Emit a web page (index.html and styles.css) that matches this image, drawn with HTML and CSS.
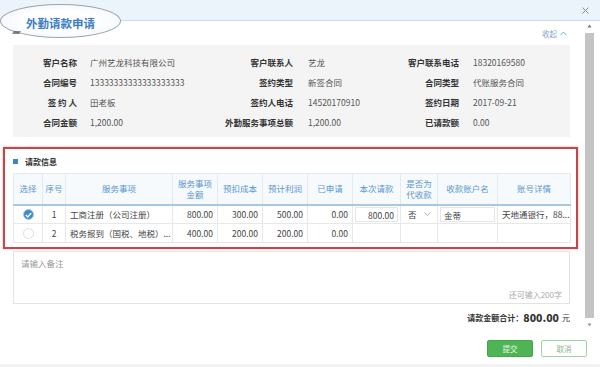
FILE: index.html
```html
<!DOCTYPE html>
<html>
<head>
  <meta charset="utf-8">
  <title>外勤请款申请</title>
  <link rel="stylesheet" href="styles.css">
</head>
<body>
  <div class="dialog">
    <div class="dlg-head">
      <svg class="close" width="7" height="7" viewBox="0 0 7 7"><path d="M0.5 0.5L6.5 6.5M6.5 0.5L0.5 6.5" stroke="#8c8c8c" stroke-width="1"/></svg>
    </div>

    <!-- 标注圈 -->
    <div class="title-oval"><span>外勤请款申请</span></div>
    <div class="oval-mark"></div>

    <div class="dlg-body">
      <div class="content">
        <div class="collapse">
          <span>收起</span>
          <svg width="7" height="5" viewBox="0 0 7 5"><path d="M0.5 4.2L3.5 1L6.5 4.2" fill="none" stroke="#7fa6cf" stroke-width="1"/></svg>
        </div>

        <div class="info-panel">
          <span class="lbl">客户名称</span><span class="val v1">广州艺龙科技有限公司</span>
          <span class="lbl">客户联系人</span><span class="val v2">艺龙</span>
          <span class="lbl">客户联系电话</span><span class="val v3">18320169580</span>

          <span class="lbl">合同编号</span><span class="val v1">13333333333333333333</span>
          <span class="lbl">签约类型</span><span class="val v2">新签合同</span>
          <span class="lbl">合同类型</span><span class="val v3">代账服务合同</span>

          <span class="lbl">签 约 人</span><span class="val v1">田老板</span>
          <span class="lbl">签约人电话</span><span class="val v2">14520170910</span>
          <span class="lbl">签约日期</span><span class="val v3">2017-09-21</span>

          <span class="lbl">合同金额</span><span class="val v1">1,200.00</span>
          <span class="lbl">外勤服务事项总额</span><span class="val v2">1,200.00</span>
          <span class="lbl">已请款额</span><span class="val v3">0.00</span>
        </div>

        <div class="section">
          <div class="section-title"><i class="sq"></i>请款信息</div>
          <table class="grid">
            <colgroup>
              <col style="width:29px"><col style="width:23px"><col style="width:107px">
              <col style="width:45px"><col style="width:45px"><col style="width:45px">
              <col style="width:45px"><col style="width:48px"><col style="width:37px">
              <col style="width:60px"><col style="width:73px">
            </colgroup>
            <thead>
              <tr>
                <th>选择</th><th>序号</th><th>服务事项</th><th>服务事项<br>金额</th>
                <th>预扣成本</th><th>预计利润</th><th>已申请</th><th>本次请款</th>
                <th>是否为<br>代收款</th><th>收款账户名</th><th>账号详情</th>
              </tr>
            </thead>
            <tbody>
              <tr>
                <td class="c"><span class="radio on"><svg width="7" height="6" viewBox="0 0 7 6"><path d="M0.8 3L2.8 5L6.2 1" fill="none" stroke="#fff" stroke-width="1.3"/></svg></span></td>
                <td class="c">1</td>
                <td>工商注册（公司注册）</td>
                <td class="r">800.00</td><td class="r">300.00</td><td class="r">500.00</td><td class="r">0.00</td>
                <td class="in"><span class="box r">800.00</span></td>
                <td class="in"><span class="sel">否<svg width="7" height="4" viewBox="0 0 7 4"><path d="M0.5 0.5L3.5 3.5L6.5 0.5" fill="none" stroke="#999" stroke-width="0.8"/></svg></span></td>
                <td class="in"><span class="box">金蒂</span></td>
                <td>天地通银行，88...</td>
              </tr>
              <tr>
                <td class="c"><span class="radio"></span></td>
                <td class="c">2</td>
                <td>税务报到（国税、地税）...</td>
                <td class="r">400.00</td><td class="r">200.00</td><td class="r">200.00</td><td class="r">0.00</td>
                <td></td><td></td><td></td><td></td>
              </tr>
            </tbody>
          </table>
        </div>

        <div class="remark">
          <span class="ph">请输入备注</span>
          <span class="count">还可输入200字</span>
        </div>

        <div class="total">请款金额合计：<b>800.00</b><span class="unit">元</span></div>
      </div>

      <div class="scrollbar">
        <svg width="9" height="10" viewBox="0 0 9 10"><path d="M2.5 6.5L4.5 3.5L6.5 6.5Z" fill="#777"/></svg>
        <div class="thumb"></div>
        <svg width="9" height="10" viewBox="0 0 9 10"><path d="M2.5 3.5L4.5 6.5L6.5 3.5Z" fill="#999"/></svg>
      </div>
    </div>

    <div class="dlg-foot">
      <button class="btn ok">提交</button>
      <button class="btn cancel">取消</button>
    </div>
  </div>
</body>
</html>
```

FILE: styles.css
```css
* {
  box-sizing: border-box;
}
body {
  margin: 0;
  background: #fff;
  font-family: "Noto Sans CJK SC", "Noto Sans", sans-serif;
  font-size: 8.5px;
  color: #555;
}
.dialog {
  position: relative;
  width: 600px;
  height: 367px;
  overflow: hidden;
}
.dlg-head {
  height: 21px;
  background: #ebf3fb;
  border-bottom: 1px solid #c9dbec;
  display: flex;
  justify-content: flex-end;
  align-items: center;
  padding-right: 11px;
}
.title-oval {
  position: absolute;
  left: 0;
  top: 4px;
  width: 121px;
  height: 34px;
  border-radius: 50%;
  border: 1px solid #9ea4aa;
  background: radial-gradient(ellipse at center, #ffffff 40%, #eef4fa 100%);
  display: flex;
  justify-content: center;
  align-items: center;
  padding-top: 5px;
}
.title-oval span {
  color: #3b7cc6;
  font-weight: bold;
  font-size: 11.5px;
  line-height: 1;
}
.oval-mark {
  position: absolute;
  left: 13px;
  top: 31px;
  width: 7px;
  height: 3px;
  background: #555;
  transform: skewX(-30deg);
  opacity: 0.7;
}
.dlg-body {
  display: flex;
  height: 309px;
}
.content {
  width: 575px;
  margin-left: 3px;
}
.collapse {
  height: 24px;
  display: flex;
  justify-content: flex-end;
  align-items: center;
  gap: 3px;
  padding-right: 11px;
  color: #7fa6cf;
  font-size: 7.5px;
}
.info-panel {
  margin: 0 8px 0 10px;
  background: #f4f4f4;
  padding: 7px 0 5px;
  display: grid;
  grid-template-columns: 64px 143px 73px 102px 64px 111px;
  grid-auto-rows: 20px;
  align-items: center;
  line-height: 1;
}
.lbl {
  text-align: right;
  font-weight: bold;
  color: #333;
  white-space: pre;
}
.val {
  color: #555;
  white-space: nowrap;
}
.v1 { padding-left: 13px; }
.v2 { padding-left: 15px; }
.v3 { padding-left: 14px; }
.section {
  margin-top: 10px;
  border: 2px solid #c4474c;
  box-shadow: 0 0 2px rgba(200, 80, 80, 0.5);
  padding: 0 6px 4px 8px;
}
.section-title {
  height: 24px;
  display: flex;
  align-items: center;
  gap: 7px;
  font-weight: bold;
  font-size: 8px;
  color: #333;
}
.sq {
  width: 5px;
  height: 5px;
  background: #3a85c6;
}
.grid {
  width: 100%;
  border-collapse: collapse;
  table-layout: fixed;
  font-size: 8.5px;
  line-height: 1.2;
}
.grid th {
  height: 31px;
  font-weight: normal;
  color: #5b97cf;
  background: #f7fafd;
  border: 1px solid #e4eaf0;
  border-bottom: 2px solid #a9c8e4;
  padding: 0;
  line-height: 11px;
}
.grid td {
  height: 19px;
  border: 1px solid #e8e8e8;
  padding: 0 4px;
  color: #444;
  white-space: nowrap;
  overflow: hidden;
}
.grid td.c { text-align: center; padding: 0; }
.grid td.r { text-align: right; }
.grid td.in { padding: 1px 2px; }
.radio {
  display: inline-flex;
  justify-content: center;
  align-items: center;
  width: 11px;
  height: 11px;
  border-radius: 50%;
  border: 1px solid #dedede;
  vertical-align: middle;
}
.radio.on {
  background: #3b8ad0;
  border-color: #a8cdee;
}
.box {
  display: block;
  height: 15px;
  line-height: 14px;
  background: #fff;
  border: 1px solid #e6e6e6;
  padding: 0 3px;
}
.box.r { text-align: right; }
.sel {
  display: flex;
  justify-content: space-between;
  align-items: center;
  padding: 0 4px 0 5px;
}
.remark {
  margin: 2px 8px 0 10px;
  height: 53px;
  border: 1px solid #e3e3e3;
  padding: 6px 7px 3px;
  display: flex;
  flex-direction: column;
  justify-content: space-between;
  color: #999;
  line-height: 1.2;
}
.count {
  align-self: flex-end;
  color: #aaa;
  font-size: 8px;
}
.total {
  height: 26px;
  margin-right: 8px;
  display: flex;
  justify-content: flex-end;
  align-items: center;
  font-weight: bold;
  color: #333;
  font-size: 8px;
}
.total b {
  font-size: 10.5px;
  margin-right: 3px;
}
.unit {
  font-weight: normal;
  font-size: 8px;
}
.scrollbar {
  width: 9px;
  margin-left: 7px;
  display: flex;
  flex-direction: column;
}
.scrollbar svg {
  flex: none;
}
.thumb {
  flex: 1;
  margin: 2px 0;
  background: #c4c4c4;
}
.dlg-foot {
  height: 37px;
  display: flex;
  justify-content: flex-end;
  align-items: flex-start;
  gap: 8px;
  padding: 10px 13px 0 0;
  border-bottom: 3px solid #f2f2f2;
}
.btn {
  width: 46px;
  height: 17px;
  font-family: inherit;
  font-size: 7.5px;
  border-radius: 2px;
  padding: 0;
}
.btn.ok {
  background: #4fb454;
  border: 1px solid #44a649;
  color: #e8f6e8;
}
.btn.cancel {
  background: #fff;
  border: 1px solid #9fd5a2;
  color: #8ab38c;
}
```
